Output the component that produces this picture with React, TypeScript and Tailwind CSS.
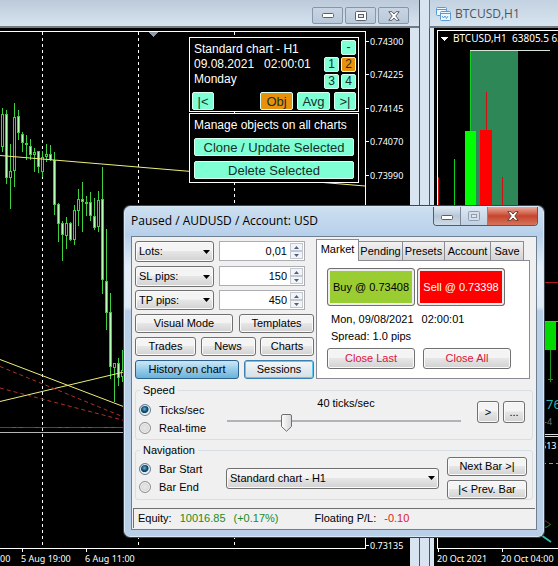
import { useState } from 'react';
import type { ReactNode } from 'react';

// x, high, low, body top, body bottom, filled
type Candle = [number, number, number, number, number, boolean];

const candles: Candle[] = [
  [2, 108, 152, 114, 147, false],
  [6, 110, 184, 114, 178, true],
  [10, 144, 209, 171, 178, false],
  [14, 103, 187, 117, 171, false],
  [18, 110, 140, 116, 133, true],
  [22, 132, 152, 134, 143, true],
  [26, 135, 160, 143, 145, false],
  [30, 139, 160, 146, 155, true],
  [34, 148, 172, 152, 155, false],
  [38, 151, 173, 151, 167, true],
  [42, 151, 177, 157, 172, false],
  [46, 144, 162, 154, 157, false],
  [50, 145, 161, 154, 160, true],
  [54, 152, 215, 160, 205, true],
  [58, 203, 242, 204, 224, true],
  [62, 221, 261, 223, 235, true],
  [66, 217, 249, 223, 236, false],
  [70, 222, 241, 223, 240, true],
  [74, 205, 245, 210, 240, false],
  [78, 189, 226, 199, 211, false],
  [82, 182, 232, 199, 202, true],
  [86, 196, 216, 202, 203, false],
  [90, 192, 221, 202, 216, true],
  [94, 198, 230, 216, 228, true],
  [98, 191, 232, 200, 227, false],
  [102, 167, 294, 199, 280, true],
  [106, 229, 330, 281, 313, true],
  [110, 293, 379, 312, 367, true],
  [114, 363, 402, 363, 368, false],
  [118, 358, 386, 363, 378, true],
  [122, 350, 382, 370, 377, false],
];

const prices: [number, string][] = [
  [41, '0.74300'],
  [74, '0.74225'],
  [108, '0.74145'],
  [141, '0.74070'],
  [175, '0.73990'],
  [209, '0.73915'],
  [545, '0.73135'],
];

function PriceChart() {
  return (
    <svg
      viewBox="0 28 410 538"
      preserveAspectRatio="xMinYMin slice"
      className="h-[538px] min-w-0 flex-1 bg-black font-['Noto_Sans',sans-serif]"
      shapeRendering="crispEdges"
      fill="none"
    >
      <path d="M0 31.5H365.5V548.5H0" stroke="#fff" />
      <path d="M149 32h9l-4.500 5z" fill="#8f9aa6" />
      <path d="M42.500 32V548M138.500 32V548M234.500 32V548" stroke="#fff" strokeDasharray="3 3" />
      <g stroke="#3fd03f">
        {candles.map(([x, high, low, top, bottom, filled]) => (
          <g key={x}>
            <path d={`M${x + 0.5} ${high}V${low}`} />
            <rect
              x={x - 0.5}
              y={top + 0.5}
              width={2}
              height={Math.max(1, bottom - top - 1)}
              fill={filled ? '#b4ffb4' : '#000'}
            />
          </g>
        ))}
      </g>
      <g stroke="#eeee7a" shapeRendering="auto">
        <path d="M0 155.500L365 186" />
        <path d="M0 359.500L126 407.500" />
        <path d="M0 401.500L126 371.500" />
      </g>
      <g stroke="#b03028" strokeDasharray="4 3" shapeRendering="auto">
        <path d="M0 366.500L126 418" />
        <path d="M0 388L126 421" />
      </g>
      <path d="M0 427.500H365" stroke="#2e7d3a" />
      <path d="M0 427.500H365" stroke="#c01818" strokeDasharray="12 4 3 4" />
      <path d="M0 432.500H365" stroke="#b5b5b5" />
      <path d="M22.500 549v3M86.500 549v3" stroke="#fff" />
      <g fontSize="9" fill="#fff">
        {prices.map(([y, label]) => (
          <g key={label}>
            <path d={`M366 ${y + 0.5}h3`} stroke="#fff" />
            <text x="370" y={y + 4}>{label}</text>
          </g>
        ))}
        <text x="0" y="562">00</text>
        <text x="21" y="562">5 Aug 19:00</text>
        <text x="85" y="562">6 Aug 11:00</text>
      </g>
    </svg>
  );
}

function BitcoinChart() {
  return (
    <svg
      viewBox="434 28 124 538"
      preserveAspectRatio="xMinYMin slice"
      className="h-[538px] min-w-0 flex-1 bg-black font-['Noto_Sans',sans-serif]"
      shapeRendering="crispEdges"
      fill="none"
    >
      <path d="M558 30.500H437.500V548.500H558" stroke="#fff" />
      <path d="M440.500 37h8l-4 4z" fill="#fff" />
      <g fontSize="10" fill="#fff">
        <text x="453" y="42">BTCUSD,H1</text>
        <text x="512" y="42">63805.5 63</text>
      </g>
      <rect x="470" y="50" width="48" height="250" fill="#2e8757" />
      <path d="M470 50.500h80" stroke="#d6e6d6" />
      <path d="M470.500 51v80M454.500 159v60" stroke="#10d020" />
      <path d="M486.500 92v40M502.500 177v40M438.500 177v40" stroke="#d01010" />
      <rect x="465" y="131" width="11" height="80" fill="#00ff00" />
      <rect x="480" y="130" width="12" height="81" fill="#ff0000" />
      <path d="M540 282.500h18" stroke="#b01818" />
      <path d="M540 321.500h18" stroke="#8a9a8a" />
      <rect x="545" y="322" width="11" height="28" fill="#00d800" />
      <path d="M550.500 350v32M548 379.500h5" stroke="#189818" />
      <text x="546" y="409" fontSize="13" fill="#2bb5ad">76</text>
      <text x="544" y="425" fontSize="9" fill="#777">-4</text>
      <path d="M540 434.500h18M540 436.500h18" stroke="#ddd" />
      <text x="541" y="449" fontSize="9" fill="#fff">513</text>
      <path d="M542 463.500h16" stroke="#999" strokeDasharray="4 3" />
      <g shapeRendering="auto">
        <path d="M541 518l9 6" stroke="#a02020" />
        <path d="M541 528l6-1 4-3" stroke="#1f8a2a" />
        <path d="M541 535l10 7" stroke="#35b8b0" strokeWidth="2" />
      </g>
      <path d="M438.500 549v3M502.500 549v3" stroke="#fff" />
      <g fontSize="9" fill="#fff">
        <text x="437" y="562">20 Oct 2021</text>
        <text x="501" y="562">20 Oct 04:00</text>
      </g>
    </svg>
  );
}

function FrameButton({ label, children }: { label: string; children: ReactNode }) {
  return (
    <button
      aria-label={label}
      className="flex h-[17px] w-[31px] items-center justify-center rounded-xs border border-[#8795a8] bg-linear-to-b from-[#c9d5e3] to-[#b9c8d9]"
    >
      {children}
    </button>
  );
}

function MinimizeGlyph() {
  return (
    <svg width="12" height="6" viewBox="0 0 12 6">
      <rect x="0.500" y="0.500" width="11" height="4" rx="1" fill="#fff" stroke="#59606b" />
    </svg>
  );
}

function MaximizeGlyph({ faded = false }: { faded?: boolean }) {
  const ink = faded ? '#8f9dae' : '#59606b';
  return (
    <svg width="12" height="10" viewBox="0 0 12 10">
      <rect x="0.500" y="0.500" width="11" height="9" rx="1" fill={faded ? '#d5dfea' : '#fff'} stroke={ink} />
      <rect x="3.500" y="3.500" width="5" height="3" fill="#dfe7f0" stroke={ink} />
    </svg>
  );
}

function CloseGlyph({ outline }: { outline: string }) {
  return (
    <svg width="12" height="10" viewBox="0 0 12 10">
      <path
        d="M0.800 0.700h3.200l2 2.300 2-2.300h3.200L7.800 5l3.400 4.300H8L6 7 4 9.300H0.800L4.200 5z"
        fill="#fff"
        stroke={outline}
        strokeWidth="1"
      />
    </svg>
  );
}

const mint =
  'flex items-center justify-center rounded-xs border border-[#d8fff0] text-[#16302a]';

function MintButton({ children, size, active = false }: { children: ReactNode; size: string; active?: boolean }) {
  return <button className={`${mint} ${size} ${active ? 'bg-[#e8920c]' : 'bg-[#7fffd4]'}`}>{children}</button>;
}

function ChartPanel() {
  return (
    <div className="absolute left-[189px] top-[37px] flex w-[170px] flex-col gap-px text-[12px] leading-[15px] text-white">
      <section className="flex flex-col gap-[3px] border border-white bg-black px-[2px] pt-[2px] pb-px">
        <div className="flex justify-between pl-[2px]">
          <div className="pt-[2px]">
            <p>Standard chart - H1</p>
            <p className="flex gap-[10px]">
              <span>09.08.2021</span>
              <span>02:00:01</span>
            </p>
            <p>Monday</p>
          </div>
          <div className="grid grid-cols-2 gap-[2px]">
            <span />
            <MintButton size="h-[15px] w-[15px]">-</MintButton>
            <MintButton size="h-[15px] w-[15px]">1</MintButton>
            <MintButton size="h-[15px] w-[15px]" active>2</MintButton>
            <MintButton size="h-[15px] w-[15px]">3</MintButton>
            <MintButton size="h-[15px] w-[15px]">4</MintButton>
          </div>
        </div>
        <div className="flex gap-[4px] text-[13px]">
          <MintButton size="h-[18px] w-[22px] mr-auto">|&lt;</MintButton>
          <MintButton size="h-[18px] w-[33px]" active>Obj</MintButton>
          <MintButton size="h-[18px] w-[33px]">Avg</MintButton>
          <MintButton size="h-[18px] w-[22px]">&gt;|</MintButton>
        </div>
      </section>
      <section className="flex flex-col gap-[5px] border border-white bg-black px-[4px] pt-[4px] pb-[3px]">
        <p>Manage objects on all charts</p>
        <MintButton size="h-[18px] w-full text-[13px]">Clone / Update Selected</MintButton>
        <MintButton size="h-[18px] w-full text-[13px]">Delete Selected</MintButton>
      </section>
    </div>
  );
}

const raised =
  'rounded-[3px] border border-[#707070] bg-linear-to-b from-[#f4f4f4] from-45% via-[#e6e6e6] via-50% to-[#d2d2d2] shadow-[inset_0_0_0_1px_#fafafa]';

function Push({ children, className }: { children: ReactNode; className: string }) {
  return <button className={`${raised} whitespace-nowrap ${className}`}>{children}</button>;
}

function Dropdown({ label, options, className }: { label: string; options: string[]; className: string }) {
  return (
    <div className={`relative ${className}`}>
      <select aria-label={label} className={`${raised} h-full w-full appearance-none pl-[3px] pr-4 leading-none`}>
        {options.map((option) => (
          <option key={option}>{option}</option>
        ))}
      </select>
      <svg className="pointer-events-none absolute right-1 top-1/2 -translate-y-1/2" width="7" height="4" viewBox="0 0 7 4">
        <path d="M0 0h7L3.500 4z" fill="#000" />
      </svg>
    </div>
  );
}

function Stepper({ label, value }: { label: string; value: string }) {
  const [text, setText] = useState(value);
  return (
    <div className="flex h-5 w-[86px] border border-[#abadb3] bg-white pr-px">
      <input
        aria-label={label}
        value={text}
        onChange={(event) => setText(event.target.value)}
        className="w-0 min-w-0 flex-1 bg-transparent pr-[3px] text-right text-[11px] outline-none"
      />
      <div className="flex w-[13px] flex-col justify-center">
        <button aria-label={`Increase ${label}`} className="flex h-2 items-center justify-center border border-[#c3c8d0] bg-[#f2f4f7]">
          <svg width="5" height="3" viewBox="0 0 5 3"><path d="M0 3h5L2.500 0z" fill="#4d6185" /></svg>
        </button>
        <button aria-label={`Decrease ${label}`} className="flex h-2 items-center justify-center border border-[#c3c8d0] bg-[#f2f4f7]">
          <svg width="5" height="3" viewBox="0 0 5 3"><path d="M0 0h5L2.500 3z" fill="#4d6185" /></svg>
        </button>
      </div>
    </div>
  );
}

function Radio({ name, label, checked = false }: { name: string; label: string; checked?: boolean }) {
  return (
    <label className="flex h-[18px] items-center gap-2">
      <input
        type="radio"
        name={name}
        defaultChecked={checked}
        className="size-3 appearance-none rounded-full border border-[#8e8f8f] bg-[radial-gradient(circle,#e8e8e8,#cfcfcf)] shadow-[inset_0_0_0_1px_#f4f4f4] checked:border-[#5f7d92] checked:bg-[radial-gradient(circle_at_45%_40%,#5fb4dd_0,#12486f_35%,#163d5c_45%,#dce6ec_55%)]"
      />
      {label}
    </label>
  );
}

const tabs = ['Pending', 'Presets', 'Account', 'Save'];
const tabWidths = ['w-[44px]', 'w-[42px]', 'w-[46px]', 'w-[33px]'];

function MarketTabs() {
  return (
    <div className="flex w-[214px] flex-col">
      <div role="tablist" className="flex items-end">
        <button role="tab" aria-selected="true" className="z-10 -mb-px h-[22px] w-[43px] border border-b-0 border-[#898c95] bg-white pb-[2px]">
          Market
        </button>
        {tabs.map((tab, index) => (
          <button
            key={tab}
            role="tab"
            aria-selected="false"
            className={`h-[19px] border border-b-0 border-l-0 border-[#898c95] bg-linear-to-b from-[#f2f2f2] to-[#d4d4d4] text-center ${tabWidths[index]}`}
          >
            {tab}
          </button>
        ))}
      </div>
      <div role="tabpanel" className="flex flex-1 flex-col border border-[#898c95] bg-white px-[10px] pt-[7px]">
        <div className="flex gap-[2px]">
          <button className="h-[38px] w-[88px] rounded-[3px] border border-[#707070] bg-[#9acd32] shadow-[inset_0_0_0_2px_#eee]">
            Buy @ 0.73408
          </button>
          <button className="h-[38px] w-[88px] rounded-[3px] border border-[#707070] bg-[#ff0000] text-white shadow-[inset_0_0_0_2px_#eee]">
            Sell @ 0.73398
          </button>
        </div>
        <p className="mt-[5px] flex gap-2 pl-1 leading-[17px]">
          <span>Mon, 09/08/2021</span>
          <span>02:00:01</span>
        </p>
        <p className="pl-1 leading-[17px]">Spread: 1.0 pips</p>
        <div className="mt-[3px] flex gap-2 text-[#dc143c]">
          <Push className="h-[21px] w-[88px]">Close Last</Push>
          <Push className="h-[21px] w-[88px]">Close All</Push>
        </div>
      </div>
    </div>
  );
}

const THUMB_WIDTH = 11;

function TickSlider() {
  const [speed, setSpeed] = useState(24);
  return (
    <div className="flex w-[234px] flex-col items-center gap-[4px]">
      <label htmlFor="tick-rate" className="ml-1">40 ticks/sec</label>
      <div className="relative h-[18px] w-full">
        <input
          id="tick-rate"
          type="range"
          value={speed}
          onChange={(event) => setSpeed(Number(event.target.value))}
          className="block h-[18px] w-full appearance-none bg-[linear-gradient(#b0b4b8,#b0b4b8)] bg-[length:100%_2px] bg-[position:0_6px] bg-no-repeat [&::-webkit-slider-thumb]:h-[18px] [&::-webkit-slider-thumb]:w-[11px] [&::-webkit-slider-thumb]:appearance-none [&::-webkit-slider-thumb]:bg-transparent"
        />
        <svg
          className="pointer-events-none absolute top-0"
          style={{ left: `calc(${speed}% - ${(THUMB_WIDTH * speed) / 100}px)` }}
          width={THUMB_WIDTH}
          height="18"
          viewBox="0 0 11 18"
        >
          <defs>
            <linearGradient id="thumb-fill">
              <stop offset="0" stopColor="#fdfdfd" />
              <stop offset="1" stopColor="#d6d6d6" />
            </linearGradient>
          </defs>
          <path
            d="M2 0.500h7a1.500 1.500 0 0 1 1.500 1.500v10.500L5.500 17.300 0.500 12.500V2A1.500 1.500 0 0 1 2 0.500z"
            fill="url(#thumb-fill)"
            stroke="#707070"
          />
        </svg>
      </div>
    </div>
  );
}

function SimulatorDialog() {
  return (
    <div
      role="dialog"
      aria-label="Paused / AUDUSD / Account: USD"
      className="absolute left-[124px] top-[206px] flex w-[420px] flex-col rounded-md border border-[#d9e8f6] bg-[linear-gradient(#cddff0,#b7d0ea_28px,#e3edf7_60px,#dde9f5_100px,#b9cfe8_104px)] px-[6px] pb-[6px] text-[11px] leading-[13px] text-black shadow-[0_0_0_1px_#3c4450]"
    >
      <header className="-mr-px flex h-[29px] items-start justify-between">
        <h1 className="font-['Open_Sans',sans-serif] text-[12px] leading-[27px]">Paused / AUDUSD / Account: USD</h1>
        <div className="flex h-[19px] overflow-hidden rounded-b-[4px] border border-t-0 border-[#525b68]">
          <button aria-label="Minimize" className="flex w-[27px] items-end justify-center border-r border-[#7b8795] bg-linear-to-b from-[#e0e9f2] via-[#b8c7d7] to-[#cedbe8] pb-1">
            <MinimizeGlyph />
          </button>
          <button aria-label="Maximize" className="flex w-[27px] items-center justify-center border-r border-[#7b8795] bg-linear-to-b from-[#dce7f2] to-[#bfd0e3]">
            <MaximizeGlyph faded />
          </button>
          <button aria-label="Close" className="flex w-[49px] items-center justify-center bg-linear-to-b from-[#e9a99b] via-[#c4452c] to-[#d5735a]">
            <CloseGlyph outline="#6b3a38" />
          </button>
        </div>
      </header>

      <div className="flex flex-col border border-[#6f7f90] bg-[#f0f0f0]">
        <div className="flex gap-[2px] px-[3px] pt-[2px]">
          <div className="flex w-[179px] flex-col gap-[4px] pt-[2px]">
            <div className="flex justify-between pr-[9px]">
              <Dropdown label="Volume unit" options={['Lots:', 'Units:']} className="h-[21px] w-[79px]" />
              <Stepper label="Volume" value="0,01" />
            </div>
            <div className="flex justify-between pr-[9px]">
              <Dropdown label="Stop loss unit" options={['SL pips:', 'SL price:']} className="h-[21px] w-[79px]" />
              <Stepper label="Stop loss" value="150" />
            </div>
            <div className="-mt-px flex justify-between pr-[9px]">
              <Dropdown label="Take profit unit" options={['TP pips:', 'TP price:']} className="h-5 w-[79px]" />
              <Stepper label="Take profit" value="450" />
            </div>
            <div className="flex justify-between">
              <Push className="h-[19px] w-[98px]">Visual Mode</Push>
              <Push className="h-[19px] w-[75px]">Templates</Push>
            </div>
            <div className="flex justify-between">
              <Push className="h-[19px] w-[61px]">Trades</Push>
              <Push className="h-[19px] w-[55px]">News</Push>
              <Push className="h-[19px] w-[54px]">Charts</Push>
            </div>
            <div className="flex justify-between">
              <button className="h-[19px] w-[104px] rounded-[3px] border border-[#2c628b] bg-linear-to-b from-[#c4e2f3] from-10% via-[#98cbe9] via-50% to-[#68b3db]">
                History on chart
              </button>
              <button className="h-[19px] w-[70px] rounded-[3px] border border-[#3c7fb1] bg-linear-to-b from-[#f4f7f8] to-[#d5dfe4] shadow-[inset_0_0_0_1px_#5ccbee]">
                Sessions
              </button>
            </div>
          </div>
          <MarketTabs />
        </div>

        <div className="flex flex-col gap-[4px] px-[3px] pt-[5px]">
          <fieldset className="flex h-[56px] rounded-[3px] border border-[#d5dfe5] pl-[3px]">
            <legend className="ml-px px-[3px]">Speed</legend>
            <div className="flex h-[42px] items-start">
              <div className="flex w-[88px] flex-col pt-1">
                <Radio name="speed" label="Ticks/sec" checked />
                <Radio name="speed" label="Real-time" />
              </div>
              <TickSlider />
              <div className="flex gap-1 pl-[16px] pt-1">
                <Push className="size-[22px]">&gt;</Push>
                <Push className="size-[22px]">...</Push>
              </div>
            </div>
          </fieldset>

          <fieldset className="flex h-[56px] rounded-[3px] border border-[#d5dfe5] pl-[3px]">
            <legend className="ml-px px-[3px]">Navigation</legend>
            <div className="flex h-[42px] items-center">
              <div className="flex w-[87px] flex-col">
                <Radio name="navigation" label="Bar Start" checked />
                <Radio name="navigation" label="Bar End" />
              </div>
              <Dropdown label="Chart" options={['Standard chart - H1']} className="h-[21px] w-[213px]" />
              <div className="flex flex-col gap-1 pl-2">
                <Push className="h-[19px] w-20">Next Bar &gt;|</Push>
                <Push className="h-[19px] w-20">|&lt; Prev. Bar</Push>
              </div>
            </div>
          </fieldset>
        </div>

        <footer className="mx-px mt-2 mb-px flex h-5 items-center border-t border-l border-[#707070] pl-1">
          <span>Equity:</span>
          <span className="ml-2 text-[#228b22]">10016.85</span>
          <span className="ml-2 text-[#228b22]">(+0.17%)</span>
          <span className="ml-9">Floating P/L:</span>
          <span className="ml-2 text-[#e02020]">-0.10</span>
        </footer>
      </div>
    </div>
  );
}

export default function App() {
  return (
    <main className="relative grid min-h-screen grid-cols-[420px_1fr] overflow-hidden bg-[#d8e5f1] font-['Liberation_Sans',Arial,sans-serif]">
      <section className="relative flex flex-col border-r border-[#4a535e]">
        <header className="flex h-7 items-start justify-end gap-[2px] border-b-2 border-[#717b86] bg-linear-to-b from-[#bccad9] to-[#d7e4f0] pt-[7px] pr-[10px]">
          <FrameButton label="Minimize chart"><MinimizeGlyph /></FrameButton>
          <FrameButton label="Maximize chart"><MaximizeGlyph /></FrameButton>
          <FrameButton label="Close chart"><CloseGlyph outline="#59606b" /></FrameButton>
        </header>
        <div className="flex pr-[9px]">
          <PriceChart />
        </div>
        <ChartPanel />
      </section>

      <section className="flex min-w-0 flex-col pl-[9px]">
        <header className="flex h-7 items-center gap-1 border-b-2 border-l border-[#717b86] bg-linear-to-b from-[#c3d2e1] to-[#d7e4f0] pl-[6px] pt-[2px]">
          <svg width="15" height="14" viewBox="0 0 15 14" fill="#eef6fd" stroke="#5b9bd5">
            <rect x="0.500" y="0.500" width="10" height="8" rx="1" />
            <path d="M1 2.500h9" />
            <rect x="4.500" y="4.500" width="10" height="9" rx="1" />
            <path d="M5 6.500h9" />
            <path d="M6 9l1.500 2L9 9l1.500 2.500L12 9" fill="none" />
          </svg>
          <h2 className="font-['Open_Sans',sans-serif] text-[12px] text-[#4c5663]">BTCUSD,H1</h2>
        </header>
        <div className="flex border-l border-[#4a535e] pl-1">
          <BitcoinChart />
        </div>
      </section>

      <SimulatorDialog />
    </main>
  );
}
